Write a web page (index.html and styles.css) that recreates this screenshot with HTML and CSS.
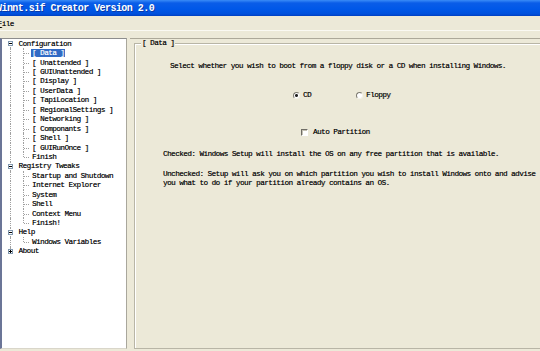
FILE: index.html
```html
<!DOCTYPE html>
<html lang="en">
<head>
  <meta charset="UTF-8" />
  <title>Winnt.sif Creator Version 2.0</title>
  <link rel="stylesheet" href="styles.css">
</head>
<body>
  <div class="window">
    <div class="titlebar">Winnt.sif Creator Version 2.0</div>
    <div class="menubar"><span class="menu"><u>F</u>ile</span></div>

    <div class="main">
      <div class="tree">
        <div class="row"><span class="gut down"><i class="box"></i></span><span class="label">Configuration</span></div>
        <div class="row"><span class="gut"></span><span class="gut tee"></span><span class="label sel">[ Data ]</span></div>
        <div class="row"><span class="gut"></span><span class="gut tee"></span><span class="label">[ Unattended ]</span></div>
        <div class="row"><span class="gut"></span><span class="gut tee"></span><span class="label">[ GUIUnattended ]</span></div>
        <div class="row"><span class="gut"></span><span class="gut tee"></span><span class="label">[ Display ]</span></div>
        <div class="row"><span class="gut"></span><span class="gut tee"></span><span class="label">[ UserData ]</span></div>
        <div class="row"><span class="gut"></span><span class="gut tee"></span><span class="label">[ TapiLocation ]</span></div>
        <div class="row"><span class="gut"></span><span class="gut tee"></span><span class="label">[ RegionalSettings ]</span></div>
        <div class="row"><span class="gut"></span><span class="gut tee"></span><span class="label">[ Networking ]</span></div>
        <div class="row"><span class="gut"></span><span class="gut tee"></span><span class="label">[ Componants ]</span></div>
        <div class="row"><span class="gut"></span><span class="gut tee"></span><span class="label">[ Shell ]</span></div>
        <div class="row"><span class="gut"></span><span class="gut tee"></span><span class="label">[ GUIRunOnce ]</span></div>
        <div class="row"><span class="gut"></span><span class="gut end"></span><span class="label">Finish</span></div>

        <div class="row"><span class="gut"><i class="box"></i></span><span class="label">Registry Tweaks</span></div>
        <div class="row"><span class="gut"></span><span class="gut tee"></span><span class="label">Startup and Shutdown</span></div>
        <div class="row"><span class="gut"></span><span class="gut tee"></span><span class="label">Internet Explorer</span></div>
        <div class="row"><span class="gut"></span><span class="gut tee"></span><span class="label">System</span></div>
        <div class="row"><span class="gut"></span><span class="gut tee"></span><span class="label">Shell</span></div>
        <div class="row"><span class="gut"></span><span class="gut tee"></span><span class="label">Context Menu</span></div>
        <div class="row"><span class="gut"></span><span class="gut end"></span><span class="label">Finish!</span></div>

        <div class="row"><span class="gut"><i class="box"></i></span><span class="label">Help</span></div>
        <div class="row"><span class="gut"></span><span class="gut end"></span><span class="label">Windows Variables</span></div>

        <div class="row"><span class="gut up"><i class="box plus"></i></span><span class="label">About</span></div>
      </div>

      <div class="pane">
        <div class="group">
          <span class="legend">[ Data ]</span>
          <p class="prompt">Select whether you wish to boot from a floppy disk or a CD when installing Windows.</p>
          <div class="choices">
            <span class="radio on"><i></i>CD</span>
            <span class="radio"><i></i>Floppy</span>
          </div>
          <div class="check"><i></i>Auto Partition</div>
          <p class="note">Checked: Windows Setup will install the OS on any free partition that is available.</p>
          <p class="note">Unchecked: Setup will ask you on which partition you wish to install Windows onto and advise<br>you what to do if your partition already contains an OS.</p>
        </div>
      </div>
    </div>
  </div>
</body>
</html>
```

FILE: styles.css
```css
* {
  box-sizing: border-box;
}
body {
  margin: 0;
  background: #ece9d8;
  color: #000;
  font-family: "Liberation Mono", "DejaVu Sans Mono", monospace;
  font-size: 7.6px;
  letter-spacing: -0.51px;
  line-height: 9.45px;
  text-shadow: 0.35px 0 0 rgba(0, 0, 0, 0.55);
}
.window {
  width: 540px;
  height: 351px;
  overflow: hidden;
  background: #ece9d8;
}
.titlebar {
  height: 16px;
  line-height: 17px;
  color: #fff;
  font-size: 10px;
  font-weight: bold;
  letter-spacing: -0.55px;
  text-indent: -4px;
  white-space: nowrap;
  text-shadow: 1px 1px 0 #0b3aa8;
  background: linear-gradient(#3a8cf7 0, #0a5de8 3px, #0058e8 9px, #0050dc 14px, #003fc0 16px);
}
.menubar {
  height: 15px;
  padding-top: 4.3px;
  border-bottom: 1px solid #faf9f3;
}
.menu {
  display: inline-block;
  margin-left: -2.4px;
}
.main {
  display: flex;
  height: 320px;
  padding-top: 7px;
}

/* tree view */
.tree {
  flex: none;
  width: 127px;
  height: 311px;
  padding-left: 1px;
  background: #fff;
  border-left: 2px solid #6b7597;
  border-top: 1px solid #8d8d8d;
  border-right: 1px solid #a9a79c;
  border-bottom: 1px solid #d9d6ca;
}
.row {
  display: flex;
  align-items: center;
  height: 9.45px;
  white-space: nowrap;
}
.gut {
  flex: none;
  align-self: stretch;
  width: 13.5px;
  position: relative;
}
.gut::before {
  content: "";
  position: absolute;
  left: 6.5px;
  top: 0;
  bottom: 0;
  border-left: 1px dotted #a0a0a0;
}
.gut.down::before {
  top: 50%;
}
.gut.up::before,
.gut.end::before {
  bottom: 50%;
}
.gut.tee::after,
.gut.end::after {
  content: "";
  position: absolute;
  left: 7px;
  right: 1px;
  top: 50%;
  border-top: 1px dotted #a0a0a0;
}
.box {
  position: absolute;
  left: 4.5px;
  top: 2.2px;
  width: 5px;
  height: 5px;
  border: 1px solid #8299b0;
  background: #fff;
  z-index: 1;
}
.box::before {
  content: "";
  position: absolute;
  left: 0;
  right: 0;
  top: 1px;
  height: 1px;
  background: #000;
}
.box.plus::after {
  content: "";
  position: absolute;
  top: 0;
  bottom: 0;
  left: 1px;
  width: 1px;
  background: #000;
}
.label {
  margin-left: 1px;
  padding: 0 1px;
  line-height: 8px;
}
.label.sel {
  background: #316ac5;
  color: #fff;
  text-shadow: 0.35px 0 0 rgba(255, 255, 255, 0.55);
}

/* right pane */
.pane {
  flex: 1;
  margin-left: 3px;
  padding: 4px 0 0 4px;
  border-top: 1px solid #aca899;
}
.group {
  position: relative;
  width: 430px;
  height: 306px;
  padding-top: 18.3px;
  border: 1px solid #b8b5a6;
  box-shadow: inset 1px 1px 0 #fff;
}
.legend {
  position: absolute;
  top: -5px;
  left: 6px;
  padding: 0 1px;
  background: #ece9d8;
}
.prompt {
  margin: 0 0 0 35px;
  white-space: nowrap;
}
.choices {
  display: flex;
  margin-top: 19.5px;
  padding-left: 158px;
}
.radio {
  display: flex;
  align-items: center;
}
.radio + .radio {
  margin-left: 45px;
}
.radio i {
  width: 7px;
  height: 7px;
  margin-right: 3px;
  border-radius: 50%;
  border: 1px solid;
  border-color: #7c7a70 #f4f3ec #f4f3ec #7c7a70;
  background: #fff;
}
.radio.on i {
  background: radial-gradient(circle, #222 1.2px, #fff 1.7px);
}
.check {
  display: flex;
  align-items: center;
  margin-top: 27px;
  padding-left: 166px;
}
.check i {
  width: 7px;
  height: 7px;
  margin-right: 5px;
  border: 1px solid;
  border-color: #6f6d66 #fff #fff #6f6d66;
  background: #fff;
  box-shadow: inset 1px 1px 0 #c5c2b5;
}
.note {
  margin: 13px 0 0 28px;
  white-space: nowrap;
}
.note + .note {
  margin-top: 10px;
}
```
